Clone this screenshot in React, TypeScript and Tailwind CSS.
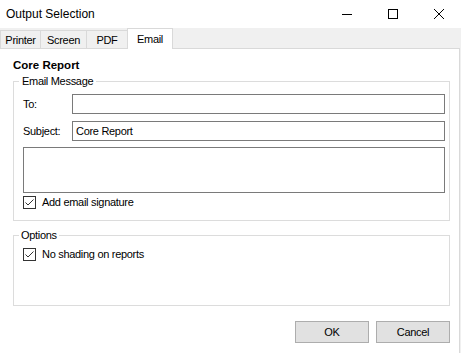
import React from 'react';

const Check: React.FC<{ label: string }> = ({ label }) => (
  <label className="flex items-center h-[14px] gap-[6px]">
    <span className="w-[13px] h-[13px] border border-[#333333] bg-white flex items-center justify-center shrink-0">
      <svg width="11" height="11" viewBox="0 0 11 11" fill="none">
        <path d="M1.5 5.5 L4 8 L9.5 2.5" stroke="#333333" strokeWidth="1" />
      </svg>
    </span>
    <span>{label}</span>
  </label>
);

const tabs = [
  { name: 'Printer', w: 'w-[40px]' },
  { name: 'Screen', w: 'w-[46px]' },
  { name: 'PDF', w: 'w-[41px]' },
];

export default function App() {
  return (
    <div
      className="w-[461px] h-[353px] overflow-hidden bg-[#f0f0f0] flex flex-col text-[11px] leading-[14px] tracking-[-0.3px] text-black"
      style={{ fontFamily: '"Liberation Sans", Arial, sans-serif' }}
    >
      {/* title bar */}
      <div className="h-[28px] bg-white flex items-center shrink-0">
        <span className="pl-[6px] text-[12px] tracking-normal">Output Selection</span>
        <div className="ml-auto flex h-full -mr-px">
          <div className="w-[46px] h-full flex items-center justify-center">
            <svg width="10" height="10" viewBox="0 0 10 10">
              <path d="M0 5.5 H10" stroke="#000" strokeWidth="1" />
            </svg>
          </div>
          <div className="w-[46px] h-full flex items-center justify-center">
            <svg width="10" height="10" viewBox="0 0 10 10">
              <rect x="0.5" y="0.5" width="9" height="9" stroke="#000" fill="none" />
            </svg>
          </div>
          <div className="w-[46px] h-full flex items-center justify-center">
            <svg width="10" height="10" viewBox="0 0 10 10">
              <path d="M0 0 L10 10 M10 0 L0 10" stroke="#000" strokeWidth="1" />
            </svg>
          </div>
        </div>
      </div>

      {/* tab strip */}
      <div className="h-[20px] flex items-end shrink-0 relative z-10">
        {tabs.map((t) => (
          <div
            key={t.name}
            className={`${t.w} h-[18px] border-l border-t border-[#d9d9d9] bg-[#f0f0f0] flex items-center justify-center`}
          >
            {t.name}
          </div>
        ))}
        <div className="w-[46px] h-[21px] -mb-px border-x border-t border-[#d9d9d9] bg-white flex items-start justify-center pt-[3px]">
          Email
        </div>
      </div>

      {/* tab page */}
      <div className="flex-1 w-[460px] bg-white border-t border-r border-[#d9d9d9] pl-[13px] pt-[9px]">
        <div className="font-bold text-[11.5px] tracking-normal">Core Report</div>

        <fieldset className="mt-[2px] w-[437px] border border-[#dcdcdc] pl-[5px] pr-[4px] pb-[11px]">
          <legend className="px-[3px]">Email Message</legend>
          <div className="pl-[4px] flex flex-col">
            <div className="mt-[6px] flex items-center">
              <span className="w-[49px]">To:</span>
              <input className="flex-1 h-[20px] border border-[#7a7a7a] px-[3px] outline-none" />
            </div>
            <div className="mt-[7px] flex items-center">
              <span className="w-[49px]">Subject:</span>
              <input
                defaultValue="Core Report"
                className="flex-1 h-[20px] border border-[#7a7a7a] px-[3px] outline-none"
              />
            </div>
            <textarea className="mt-[6px] h-[46px] border border-[#7a7a7a] resize-none outline-none" />
            <div className="mt-[2px]">
              <Check label="Add email signature" />
            </div>
          </div>
        </fieldset>

        <fieldset className="mt-[7px] w-[437px] border border-[#dcdcdc] pl-[5px] pr-[4px] pb-[44px]">
          <legend className="px-[2px]">Options</legend>
          <div className="pl-[4px] mt-[5px]">
            <Check label="No shading on reports" />
          </div>
        </fieldset>

        <div className="w-[437px] mt-[15px] flex justify-end gap-[7px]">
          <button className="w-[74px] h-[22px] bg-[#e1e1e1] border border-[#adadad]">OK</button>
          <button className="w-[74px] h-[22px] bg-[#e1e1e1] border border-[#adadad]">Cancel</button>
        </div>
      </div>
    </div>
  );
}
